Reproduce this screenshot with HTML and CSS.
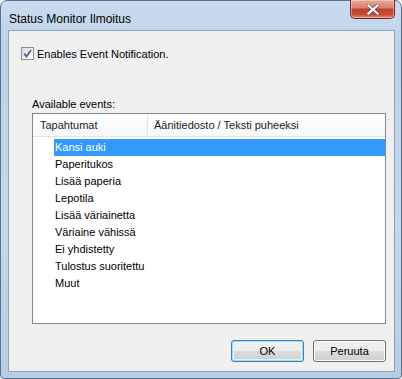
FILE: index.html
```html
<!DOCTYPE html>
<html lang="fi">
<head>
  <meta charset="UTF-8">
  <title>Status Monitor Ilmoitus</title>
  <link rel="stylesheet" href="styles.css">
</head>
<body>
  <div class="window">
    <div class="titlebar">
      <span class="title">Status Monitor Ilmoitus</span>
      <button class="close" aria-label="Sulje">
        <svg width="12" height="11" viewBox="0 0 12 11">
          <path d="M1.5 1.5 L10.5 9.5 M10.5 1.5 L1.5 9.5" stroke="#6a3a34" stroke-width="3.6" stroke-linecap="square"/>
          <path d="M1.5 1.5 L10.5 9.5 M10.5 1.5 L1.5 9.5" stroke="#fff" stroke-width="2.2" stroke-linecap="square"/>
        </svg>
      </button>
    </div>

    <div class="client">
      <label class="check-row">
        <span class="checkbox">
          <svg width="9" height="9" viewBox="0 0 9 9">
            <path d="M1 4.5 L3.5 7.5 L8 1" fill="none" stroke="#4a5f97" stroke-width="1.8"/>
          </svg>
        </span>
        Enables Event Notification.
      </label>

      <div class="events-label">Available events:</div>

      <!-- Event list -->
      <div class="listbox">
        <div class="list-header">
          <div class="col col-event">Tapahtumat</div>
          <div class="col col-sound">Äänitiedosto / Teksti puheeksi</div>
        </div>
        <div class="list-body">
          <div class="row selected">Kansi auki</div>
          <div class="row">Paperitukos</div>
          <div class="row">Lisää paperia</div>
          <div class="row">Lepotila</div>
          <div class="row">Lisää väriainetta</div>
          <div class="row">Väriaine vähissä</div>
          <div class="row">Ei yhdistetty</div>
          <div class="row">Tulostus suoritettu</div>
          <div class="row">Muut</div>
        </div>
      </div>

      <div class="buttons">
        <button class="btn btn-default">OK</button>
        <button class="btn">Peruuta</button>
      </div>
    </div>
  </div>
</body>
</html>
```

FILE: styles.css
```css
body {
  margin: 0;
  background: #ffffff;
  font-family: "Liberation Sans", Arial, sans-serif;
}
.window {
  width: 402px;
  height: 379px;
  box-sizing: border-box;
  display: flex;
  flex-direction: column;
  padding: 0 6px 6px 7px;
  border: 1px solid #5d7086;
  border-radius: 7px 7px 4px 4px;
  background: linear-gradient(to bottom, #cadcef 0%, #bcd2ea 12%, #c4d8ed 60%, #b6cde6 100%);
}
.titlebar {
  height: 29px;
  display: flex;
  justify-content: space-between;
  align-items: flex-start;
}
.title {
  font-size: 12px;
  color: #000;
  margin: 11px 0 0 1px;
}
.close {
  width: 45px;
  height: 19px;
  margin: -1px 0 0 0;
  padding: 0;
  border: 1px solid #6b2b25;
  border-top: none;
  border-radius: 0 0 5px 5px;
  background: linear-gradient(to bottom, #eba797 0%, #d9806d 45%, #c23d2a 50%, #c84a36 80%, #e38a70 100%);
  box-shadow: inset 0 0 0 1px rgba(255, 220, 210, 0.5);
  display: flex;
  align-items: center;
  justify-content: center;
}
.client {
  flex: 1;
  background: #f0f0f0;
  border: 1px solid #8ea1b5;
  display: flex;
  flex-direction: column;
  font-size: 11px;
  color: #000;
}
.check-row {
  display: flex;
  align-items: center;
  gap: 3px;
  margin: 16px 0 0 12px;
  height: 13px;
}
.checkbox {
  width: 11px;
  height: 11px;
  border: 1px solid #8e8f8f;
  background: linear-gradient(135deg, #dcdcdc, #fdfdfd);
  display: flex;
  align-items: center;
  justify-content: center;
}
.events-label {
  margin: 38px 0 0 23px;
  height: 14px;
}
.listbox {
  margin: 1px 8px 0 23px;
  height: 209px;
  border: 1px solid #828790;
  background: #fff;
  display: flex;
  flex-direction: column;
}
.list-header {
  height: 22px;
  display: flex;
  border-bottom: 1px solid #e5e5e5;
  background: linear-gradient(to bottom, #ffffff, #f7f8fa);
}
.col {
  display: flex;
  align-items: center;
  color: #1b1b1b;
}
.col-event {
  width: 107px;
  padding-left: 7px;
  border-right: 1px solid #e5e5e5;
}
.col-sound {
  padding-left: 6px;
}
.list-body {
  padding-top: 2px;
}
.row {
  height: 17px;
  line-height: 17px;
  margin-left: 21px;
  padding-left: 1px;
}
.row.selected {
  background: #3399ff;
  color: #fff;
}
.buttons {
  display: flex;
  justify-content: flex-end;
  gap: 9px;
  margin: 16px 8px 0 0;
}
.btn {
  width: 73px;
  height: 22px;
  font-family: "Liberation Sans", Arial, sans-serif;
  font-size: 11px;
  color: #000;
  border: 1px solid #707070;
  border-radius: 3px;
  background: linear-gradient(to bottom, #f2f2f2 0%, #ebebeb 50%, #dddddd 50%, #cfcfcf 100%);
  box-shadow: inset 0 0 0 1px #fcfcfc;
  padding: 0;
}
.btn-default {
  border-color: #3c7fb1;
  box-shadow: inset 0 0 0 1px #a9dcf6, inset 0 0 0 2px #e4f3fb;
}
```
